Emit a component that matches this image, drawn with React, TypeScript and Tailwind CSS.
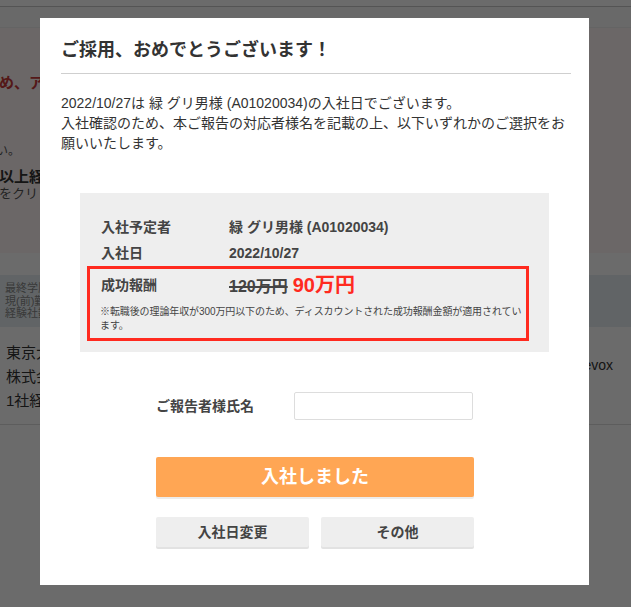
import React from "react";

const font = "font-['Liberation_Sans','Noto_Sans_CJK_JP',sans-serif]";

function BackgroundPage() {
  return (
    <div className="w-[631px] h-[607px] bg-white overflow-hidden">
      <div className="h-[6px] bg-white" />
      <div className="h-px bg-[#c8c8c8]" />
      <div className="h-[20px] bg-[#fbfbfb]" />
      {/* notice area */}
      <div className="h-[226px] bg-[#fff6f6] border-t border-[#eee]">
        <div className="pt-[45px] text-[15px] leading-[20px] font-bold text-[#c83a3a] -ml-[1px] whitespace-nowrap">
          め、アプリケーションのご利用をお願いいたします。
        </div>
        <div className="mt-[50px] text-[12px] leading-[16px] text-[#555] -ml-[4px] whitespace-nowrap">
          い。
        </div>
        <div className="mt-[9px] text-[15px] leading-[18px] font-bold text-[#333] -ml-[1px] whitespace-nowrap">
          以上経過しています
        </div>
        <div className="text-[13px] leading-[16px] text-[#555] -ml-[1px] whitespace-nowrap">
          をクリックしてください
        </div>
      </div>
      <div className="h-[22px] bg-white" />
      {/* table header */}
      <div className="h-[52px] bg-[#e6eff3] pl-[5px] pt-[7px] text-[11px] leading-[12.5px] text-[#888]">
        <div>最終学歴</div>
        <div>現(前)勤務先</div>
        <div>経験社数</div>
      </div>
      {/* table row */}
      <div className="h-[98px] border-b border-[#ddd] pl-[6px] pt-[14px] flex justify-between text-[15px] leading-[24px] text-[#333]">
        <div>
          <div>東京大学</div>
          <div>株式会社</div>
          <div>1社経験</div>
        </div>
        <div className="pt-[12px] pr-[18px] text-[14px]">Devox</div>
      </div>
    </div>
  );
}

function InfoRow({ label, value }: { label: string; value: React.ReactNode }) {
  return (
    <div className="flex items-center pl-[14px] text-[14px] font-bold text-[#444]">
      <div className="w-[128px]">{label}</div>
      <div>{value}</div>
    </div>
  );
}

export default function App() {
  return (
    <div className={`relative w-[631px] h-[607px] overflow-hidden ${font}`}>
      <BackgroundPage />
      <div className="fixed inset-0 bg-black/[0.58]" />

      <div className="fixed left-[40px] top-[18px] w-[549px] h-[567px] bg-white pl-[21px] pr-[18px] pt-[20px]">
        <h2 className="text-[18px] leading-[24px] font-bold text-[#333]">
          ご採用、おめでとうございます！
        </h2>
        <div className="mt-[11px] h-px bg-[#cfcfcf]" />

        <p className="mt-[19px] text-[14px] leading-[20px] text-[#333]">
          2022/10/27は 緑 グリ男様 (A01020034)の入社日でございます。
          <br />
          入社確認のため、本ご報告の対応者様名を記載の上、以下いずれかのご選択をお願いいたします。
        </p>

        {/* summary box */}
        <div className="mt-[40px] ml-[19px] w-[469px] bg-[#eeeeee] pt-[20px] pb-[11px] pl-[7px] pr-[20px]">
          <div className="h-[28px] flex items-center">
            <InfoRow label="入社予定者" value="緑 グリ男様 (A01020034)" />
          </div>
          <div className="h-[24px] flex items-center">
            <InfoRow label="入社日" value="2022/10/27" />
          </div>
          <div className="mt-[1px] border-[3px] border-[#ff2a1f] pl-[10px] pr-[1px] pt-[2px] pb-[5px]">
            <div className="h-[28px] flex items-center text-[#444] font-bold">
              <div className="w-[129px] pl-px text-[14px]">成功報酬</div>
              <div className="flex items-baseline gap-[5px]">
                <span className="text-[16px] line-through decoration-[2px]">120万円</span>
                <span className="text-[20px] text-[#ff2a1f]">90万円</span>
              </div>
            </div>
            <p className="mt-[6px] text-[10px] leading-[14px] tracking-[-0.1px] text-[#444]">
              ※転職後の理論年収が300万円以下のため、ディスカウントされた成功報酬金額が適用されています。
            </p>
          </div>
        </div>

        {/* reporter name */}
        <div className="mt-[40px] ml-[95px] w-[318px] flex items-center">
          <label className="w-[138px] text-[14px] font-bold text-[#444]">ご報告者様氏名</label>
          <input
            type="text"
            className="w-[179px] h-[28px] border border-[#dddddd] rounded-[2px] bg-white outline-none px-2 text-[14px]"
          />
        </div>

        <button className="mt-[37px] ml-[95px] w-[318px] h-[40px] rounded-[2px] bg-[#ffa654] shadow-[0_2px_0_#ececec] text-white text-[18px] font-bold">
          入社しました
        </button>

        <div className="mt-[20px] ml-[95px] w-[318px] flex gap-[12px]">
          <button className="w-[153px] h-[30px] rounded-[2px] bg-[#eeeeee] shadow-[0_2px_0_#e2e2e2] text-[14px] font-bold text-[#444]">
            入社日変更
          </button>
          <button className="w-[153px] h-[30px] rounded-[2px] bg-[#eeeeee] shadow-[0_2px_0_#e2e2e2] text-[14px] font-bold text-[#444]">
            その他
          </button>
        </div>
      </div>
    </div>
  );
}
